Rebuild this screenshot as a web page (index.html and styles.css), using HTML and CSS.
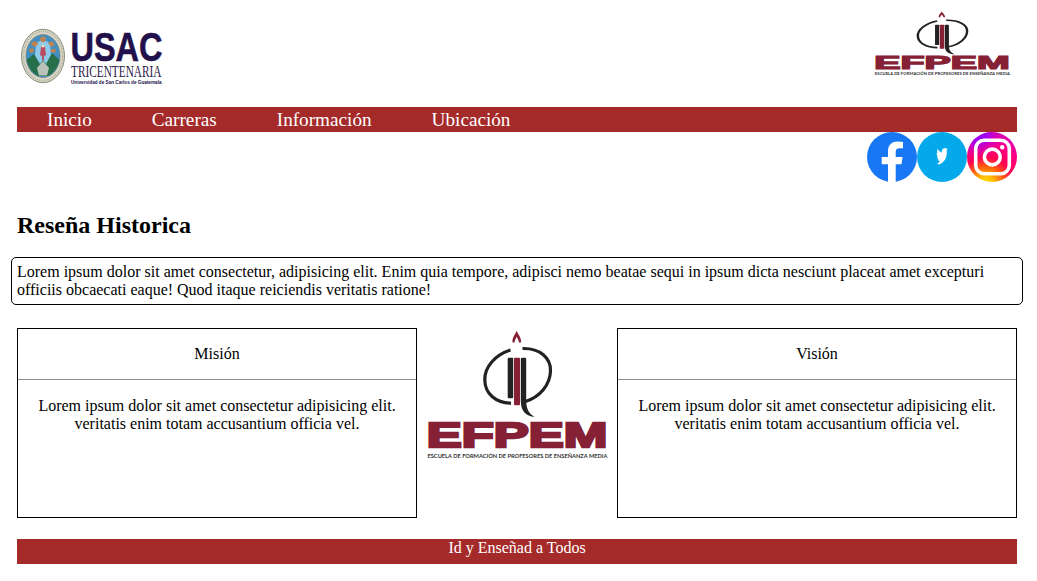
FILE: index.html
```html
<!DOCTYPE html>
<html lang="es">
<head>
<meta charset="utf-8">
<title>EFPEM</title>
<link rel="stylesheet" href="styles.css">
</head>
<body>
<header class="header">
  <svg class="usac" viewBox="0 0 150 97" role="img" aria-label="USAC">
    <ellipse cx="26" cy="46" rx="21.500" ry="26.700" fill="#d9d7c8" stroke="#8d8c7c" stroke-width="1"/>
    <ellipse cx="26" cy="46" rx="19.500" ry="24.500" fill="none" stroke="#aaa998" stroke-width="1.500" stroke-dasharray="1 1.200"/>
    <ellipse cx="26" cy="46" rx="17" ry="21.500" fill="#3f8fc4" stroke="#777c70" stroke-width=".7"/>
    <path d="M19 34Q26 26 33 34L35 58H17Z" fill="#8fc9ea"/>
    <path d="M9.500 50L17 44L23 54L26 50L29 54L35 43L42.500 50Q40 61 31 66H21Q12 61 9.500 50Z" fill="#25704b"/>
    <path d="M20 58L26 51L32 58L30 65.500H22Z" fill="#b9c3b9"/>
    <g fill="#bd8350">
      <path d="M23 28l3-2 3 2-1 4h-4zM15 32l4-1 2 3-3 3-4-2zM31 33l4-2 3 4-4 2zM12 39l4-1 1 4-4 1zM34 39l5 0-1 4-4-1z"/>
    </g>
    <path d="M24 37l2-2 2 2 1 8-2 1v4h-2v-4l-2-1z" fill="#b94c65"/>
    <circle cx="26" cy="36" r="1.500" fill="#ecd8b4"/>
    <text class="usac-name" x="53.500" y="50.500" textLength="92" lengthAdjust="spacingAndGlyphs">USAC</text>
    <text class="usac-tri" x="54" y="66.700" textLength="90.500" lengthAdjust="spacingAndGlyphs">TRICENTENARIA</text>
    <text class="usac-sub" x="54" y="73.500" textLength="90.500" lengthAdjust="spacingAndGlyphs">Universidad de San Carlos de Guatemala</text>
  </svg>
  <svg class="efpem-small" viewBox="0 0 200 150" preserveAspectRatio="none" role="img" aria-label="EFPEM"><use href="#efpem"/></svg>
</header>

<nav class="nav">
  <a class="nav-link">Inicio</a>
  <a class="nav-link">Carreras</a>
  <a class="nav-link">Información</a>
  <a class="nav-link">Ubicación</a>
</nav>

<div class="social">
  <svg class="social-icon" viewBox="0 0 50 50">
    <circle cx="25" cy="25" r="25" fill="#1877f2"/>
    <path fill="#fff" d="M21 50V32.300H14.700V25H21V19.500C21 12.500 25 9.500 31 9.500Q34 9.500 36 10V16.200H32.500C29.500 16.200 28.700 17.500 28.700 20V25H35.600L34.500 32.300H28.700V50Z"/>
  </svg>
  <svg class="social-icon" viewBox="0 0 50 50">
    <circle cx="25" cy="25" r="25" fill="#03a9ea"/>
    <path fill="#fff" d="M20 17C21.500 18.500 23 19.800 24.700 20.800C24.500 18 26 16 28 16.300L30.500 16.500L29.700 18.500C30.500 25 27.500 31.500 21 32.500L20.500 31.500L23 29.500L20.800 28L21.500 27L19.700 25L20.700 24.500L19.300 21.800L20.300 21.500Z"/>
  </svg>
  <svg class="social-icon" viewBox="0 0 50 50">
    <defs>
      <radialGradient id="warm" cx=".38" cy="1.050" r="1">
        <stop offset="0" stop-color="#ffe000"/>
        <stop offset=".15" stop-color="#ffc400"/>
        <stop offset=".37" stop-color="#ff5a10"/>
        <stop offset=".55" stop-color="#ff0055"/>
        <stop offset=".78" stop-color="#ff0080"/>
        <stop offset="1" stop-color="#e000b0"/>
      </radialGradient>
      <radialGradient id="violet" cx=".2" cy="0" r=".55">
        <stop offset="0" stop-color="#8a00ff"/>
        <stop offset=".4" stop-color="#a800ea"/>
        <stop offset="1" stop-color="#e000b0" stop-opacity="0"/>
      </radialGradient>
    </defs>
    <circle cx="25" cy="25" r="25" fill="url(#warm)"/>
    <circle cx="25" cy="25" r="25" fill="url(#violet)"/>
    <g fill="none" stroke="#fff" stroke-width="3.600">
      <rect x="8.700" y="8.200" width="33.600" height="33.600" rx="8.500"/>
      <circle cx="25.300" cy="25" r="7.900"/>
    </g>
    <circle cx="35.200" cy="15.300" r="2.200" fill="#fff"/>
  </svg>
</div>

<h2 class="title">Reseña Historica</h2>
<div class="intro-wrap">
  <p class="intro">Lorem ipsum dolor sit amet consectetur, adipisicing elit. Enim quia tempore, adipisci nemo beatae sequi in ipsum dicta nesciunt placeat amet excepturi officiis obcaecati eaque! Quod itaque reiciendis veritatis ratione!</p>
</div>

<main class="columns">
  <section class="card">
    <p class="card-title">Misión</p>
    <p class="card-text">Lorem ipsum dolor sit amet consectetur adipisicing elit. veritatis enim totam accusantium officia vel.</p>
  </section>
  <svg class="efpem-large" viewBox="0 0 200 150" role="img" aria-label="EFPEM">
    <g id="efpem">
      <path fill="#862034" d="M99.700 2.800C98 7 95 9.500 95.500 14.500L97.600 14.500C97.800 12 99 10.500 99.700 8.800C100.500 10.500 101.700 12 101.900 14.500L104.100 14.500C104.400 9.500 101.300 7 99.700 2.800Z"/>
      <g fill="none" stroke="#222" stroke-width="3.200">
        <path d="M93.500 22C78 27 67.500 39 67.800 52C68 66 79 75 94 75.200"/>
        <path d="M105.500 20.500C123 20 134 30 133.500 43C133 57 123 69 108.500 73.500"/>
      </g>
      <rect x="90.700" y="29.700" width="5.500" height="40.500" rx="1" fill="#222"/>
      <rect x="97" y="29.700" width="6" height="47.600" rx="1" fill="#862034"/>
      <path fill="#222" d="M103.800 31Q103.800 29.700 105 29.700H108Q109.200 29.700 109.200 31V72C109.200 81 112 86 117.500 88.700C109 88.500 103.800 83 103.800 73Z"/>
      <text class="efpem-name" x="9.800" y="118.800" textLength="180.500" lengthAdjust="spacingAndGlyphs">EFPEM</text>
      <text class="efpem-sub" x="10.500" y="130.300" textLength="180" lengthAdjust="spacingAndGlyphs">ESCUELA DE FORMACIÓN DE PROFESORES DE ENSEÑANZA MEDIA</text>
    </g>
  </svg>
  <section class="card">
    <p class="card-title">Visión</p>
    <p class="card-text">Lorem ipsum dolor sit amet consectetur adipisicing elit. veritatis enim totam accusantium officia vel.</p>
  </section>
</main>

<footer class="footer">Id y Enseñad a Todos</footer>
</body>
</html>
```
FILE: styles.css
```css
* { box-sizing: border-box; }
body {
  margin: 0;
  padding-top: 10px;
  background: #fff;
  color: #000;
  font: 16px/18px "Liberation Serif", "Times New Roman", serif;
}
svg { display: block; }
.header, .nav, .social, .title, .columns, .footer {
  width: 1000px;
  margin-left: 17px;
}
.header {
  display: flex;
  justify-content: space-between;
  align-items: flex-start;
  height: 97px;
}
.usac { width: 150px; height: 97px; }
.efpem-small { width: 150px; height: 75px; }
.efpem-large { width: 200px; height: 150px; }
.efpem-name {
  font: bold 35px "Liberation Sans", Arial, sans-serif;
  fill: #862034;
  stroke: #862034;
  stroke-width: 2.4px;
}
.efpem-sub {
  font: bold 6.2px Lato, sans-serif;
  fill: #333;
}
.usac-name {
  font: bold 41.5px "Liberation Sans", Arial, sans-serif;
  fill: #21104a;
  stroke: #21104a;
  stroke-width: 0.6px;
}
.usac-tri {
  font: 16px "Liberation Serif", serif;
  fill: #2b2148;
}
.usac-sub {
  font: bold 5.3px "Liberation Sans", Arial, sans-serif;
  fill: #21104a;
}
.nav {
  display: flex;
  gap: 60px;
  height: 25px;
  padding: 0 30px;
  background: #a52a2a;
}
.nav-link {
  color: #fff;
  font-size: 19.2px;
  line-height: 26px;
}
.social {
  display: flex;
  justify-content: flex-end;
  height: 50px;
}
.social-icon { width: 50px; height: 50px; }
.title {
  margin-top: 30px;
  margin-bottom: 18px;
  font-size: 24px;
  line-height: 27px;
}
.intro-wrap { padding-left: 11px; }
.intro {
  width: 1012px;
  margin: 0;
  padding: 5px;
  border: 1px solid #000;
  border-radius: 5px;
}
.columns {
  display: flex;
  align-items: flex-start;
  margin-top: 23px;
}
.card {
  width: 400px;
  height: 190px;
  border: 1px solid #000;
  text-align: center;
}
.card-title {
  margin: 0;
  padding: 16px 0;
  border-bottom: 1px solid #8f8f8f;
}
.card-text {
  margin: 0;
  padding: 17px 16px;
}
.footer {
  height: 25px;
  margin-top: 21px;
  background: #a52a2a;
  color: #fff;
  text-align: center;
}
```
